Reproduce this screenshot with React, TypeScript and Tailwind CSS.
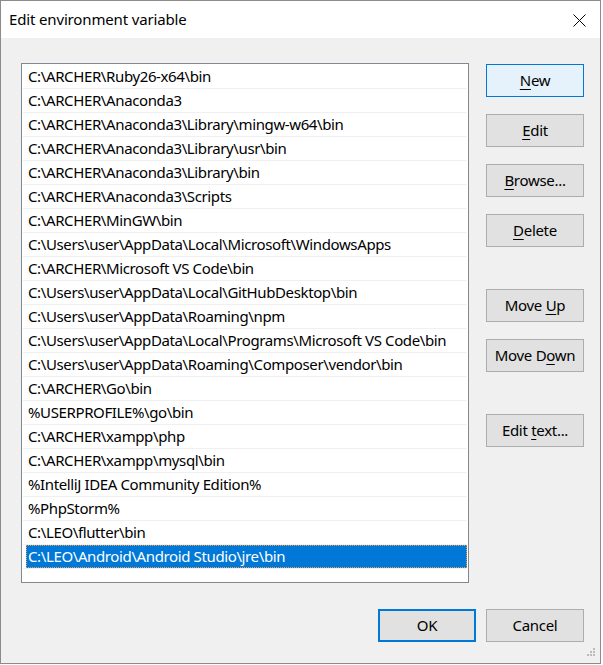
import React from "react";

const paths = [
  "C:\\ARCHER\\Ruby26-x64\\bin",
  "C:\\ARCHER\\Anaconda3",
  "C:\\ARCHER\\Anaconda3\\Library\\mingw-w64\\bin",
  "C:\\ARCHER\\Anaconda3\\Library\\usr\\bin",
  "C:\\ARCHER\\Anaconda3\\Library\\bin",
  "C:\\ARCHER\\Anaconda3\\Scripts",
  "C:\\ARCHER\\MinGW\\bin",
  "C:\\Users\\user\\AppData\\Local\\Microsoft\\WindowsApps",
  "C:\\ARCHER\\Microsoft VS Code\\bin",
  "C:\\Users\\user\\AppData\\Local\\GitHubDesktop\\bin",
  "C:\\Users\\user\\AppData\\Roaming\\npm",
  "C:\\Users\\user\\AppData\\Local\\Programs\\Microsoft VS Code\\bin",
  "C:\\Users\\user\\AppData\\Roaming\\Composer\\vendor\\bin",
  "C:\\ARCHER\\Go\\bin",
  "%USERPROFILE%\\go\\bin",
  "C:\\ARCHER\\xampp\\php",
  "C:\\ARCHER\\xampp\\mysql\\bin",
  "%IntelliJ IDEA Community Edition%",
  "%PhpStorm%",
  "C:\\LEO\\flutter\\bin",
  "C:\\LEO\\Android\\Android Studio\\jre\\bin",
];

const selected = paths.length - 1;

// label with an access-key letter underlined
function Label({ before, k, after }: { before?: string; k: string; after?: string }) {
  return (
    <span>
      {before}
      <span className="underline decoration-1 underline-offset-[3px]">{k}</span>
      {after}
    </span>
  );
}

function Btn({
  children,
  variant = "normal",
}: {
  children: React.ReactNode;
  variant?: "normal" | "hover" | "default";
}) {
  const look =
    variant === "hover"
      ? "border border-[#0078d7] bg-[#e5f1fb]"
      : variant === "default"
      ? "border-2 border-[#0078d7] bg-[#e1e1e1]"
      : "border border-[#adadad] bg-[#e1e1e1]";
  return (
    <button
      className={`w-[98px] h-[33px] flex items-center justify-center text-[15px] tracking-[-0.3px] text-black leading-none ${look}`}
    >
      {children}
    </button>
  );
}

export default function App() {
  return (
    <div
      className="w-[603px] h-[665px] bg-white"
      style={{ fontFamily: '"Noto Sans", "Open Sans", sans-serif' }}
    >
      <div className="w-[601px] h-[664px] border border-[#8c8c8c] flex flex-col">
        {/* title bar */}
        <div className="h-[37px] bg-white flex items-center justify-between pl-2 pr-[14px]">
          <span className="text-[15px] tracking-[-0.15px] text-black">Edit environment variable</span>
          <svg width="13" height="13" viewBox="0 0 13 13" className="mt-[1px]">
            <path d="M0.5 0.5 L12.5 12.5 M12.5 0.5 L0.5 12.5" stroke="#000" strokeWidth="1" />
          </svg>
        </div>

        {/* body */}
        <div className="flex-1 bg-[#f0f0f0] flex flex-col pt-[25px] pl-[20px] relative">
          <div className="flex gap-[17px]">
            <div className="w-[448px] h-[520px] border border-[#828790] bg-white pt-px">
              {paths.map((p, i) => (
                <div key={i} className="ml-px mr-px h-[24px] border-b border-[#f0f0f0]">
                  <div
                    className={`ml-[3px] h-[23px] flex items-center pl-[2px] text-[15px] tracking-[-0.38px] whitespace-nowrap ${
                      i === selected
                        ? "bg-[#0078d7] text-white outline outline-1 outline-dotted outline-offset-[-1px] outline-[#e8a050]"
                        : "text-black"
                    }`}
                  >
                    {p}
                  </div>
                </div>
              ))}
            </div>

            <div className="flex flex-col pt-px">
              <Btn variant="hover">
                <Label k="N" after="ew" />
              </Btn>
              <div className="h-[17px]" />
              <Btn>
                <Label k="E" after="dit" />
              </Btn>
              <div className="h-[17px]" />
              <Btn>
                <Label k="B" after="rowse..." />
              </Btn>
              <div className="h-[17px]" />
              <Btn>
                <Label k="D" after="elete" />
              </Btn>
              <div className="h-[42px]" />
              <Btn>
                <Label before="Move " k="U" after="p" />
              </Btn>
              <div className="h-[17px]" />
              <Btn>
                <Label before="Move D" k="o" after="wn" />
              </Btn>
              <div className="h-[42px]" />
              <Btn>
                <Label before="Edit " k="t" after="ext..." />
              </Btn>
            </div>
          </div>

          <div className="flex justify-end gap-[10px] mt-[26px] pr-[16px]">
            <Btn variant="default">OK</Btn>
            <Btn>Cancel</Btn>
          </div>

          {/* resize grip */}
          <svg width="12" height="12" viewBox="0 0 12 12" className="absolute right-[3px] bottom-[3px]">
            <g fill="#bcbcbc">
              <rect x="8" y="0" width="2" height="2" />
              <rect x="5" y="3" width="2" height="2" />
              <rect x="8" y="3" width="2" height="2" />
              <rect x="2" y="6" width="2" height="2" />
              <rect x="5" y="6" width="2" height="2" />
              <rect x="8" y="6" width="2" height="2" />
            </g>
          </svg>
        </div>
      </div>
    </div>
  );
}
